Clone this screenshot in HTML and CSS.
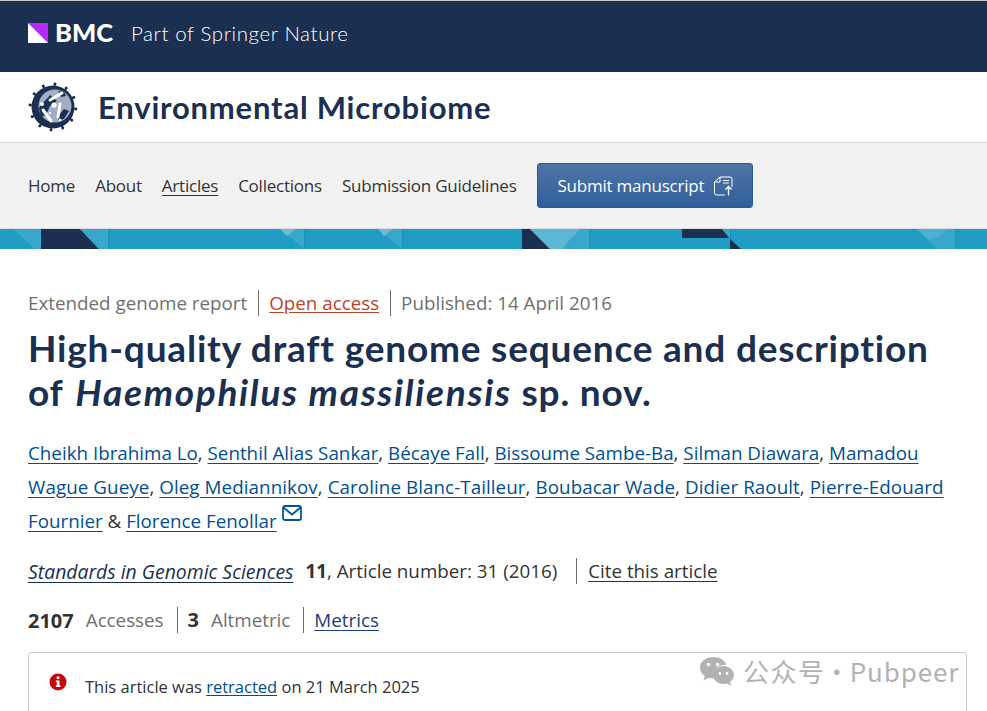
FILE: index.html
```html
<!DOCTYPE html>
<html lang="en">
<head>
<meta charset="utf-8">
<title>High-quality draft genome sequence and description of Haemophilus massiliensis sp. nov.</title>
<link rel="stylesheet" href="styles.css">
</head>
<body>
<header class="brand-bar">
  <svg class="bmc-mark" viewBox="0 0 20 20" width="20" height="20" aria-hidden="true"><rect width="20" height="20" fill="#fff"/><polygon points="0,0 20,0 20,20" fill="#b52bff"/></svg>
  <span class="bmc-word">BMC</span>
  <span class="bmc-part">Part of Springer Nature</span>
</header>
<div class="journal-bar">
  <svg class="journal-logo" viewBox="0 0 50 50" width="50" height="50" aria-hidden="true">
    <defs><g id="spike"><line x1="25" y1="2" x2="25" y2="8" stroke="#1b3051" stroke-width="1.500"/><circle cx="25" cy="2" r="1.500" fill="#1b3051"/></g></defs>
    <use href="#spike" transform="rotate(5 25 25)"/><use href="#spike" transform="rotate(35 25 25)"/>
    <use href="#spike" transform="rotate(65 25 25)"/><use href="#spike" transform="rotate(95 25 25)"/>
    <use href="#spike" transform="rotate(125 25 25)"/><use href="#spike" transform="rotate(155 25 25)"/>
    <use href="#spike" transform="rotate(185 25 25)"/><use href="#spike" transform="rotate(215 25 25)"/>
    <use href="#spike" transform="rotate(245 25 25)"/><use href="#spike" transform="rotate(275 25 25)"/>
    <use href="#spike" transform="rotate(305 25 25)"/><use href="#spike" transform="rotate(335 25 25)"/>
    <circle cx="25" cy="25" r="21.500" fill="#1b3051"/>
    <circle cx="27" cy="24" r="16.500" fill="#a3aec6"/>
    <path d="M11 26c3-6 8-8 11-13l7 6-7 5-4 9-5 2zM31 33l5-6 5 2-5 8-6 1zM30 9l6 1 2 4-5 1z" fill="#1b3051"/>
    <g stroke="#fff" stroke-width="3" stroke-linecap="round">
      <line x1="22" y1="18" x2="34" y2="11"/><line x1="15" y1="28" x2="23" y2="39"/><line x1="32" y1="22" x2="30" y2="35"/>
    </g>
    <circle cx="14" cy="22" r="2" fill="#fff"/><circle cx="26" cy="23" r="2.600" fill="#fff"/><circle cx="22" cy="31" r="1.200" fill="#fff"/><circle cx="32" cy="38" r="1.300" fill="#fff"/>
  </svg>
  <span class="journal-name">Environmental Microbiome</span>
</div>
<nav class="nav">
  <a class="nav-link" href="#">Home</a>
  <a class="nav-link" href="#">About</a>
  <a class="nav-link is-current" href="#">Articles</a>
  <a class="nav-link" href="#">Collections</a>
  <a class="nav-link" href="#">Submission Guidelines</a>
  <a class="submit" href="#">Submit manuscript
    <svg class="submit-icon" viewBox="0 0 20 20" width="20" height="20" fill="none" stroke="#fff" stroke-width="1" aria-hidden="true"><path d="M7 1h10a2 2 0 0 1 2 2v8M7 1 1.500 6v11a2 2 0 0 0 2 2h8.500M7 1v5H1.500M10 4.500h6M10 7h6"/><path d="M15.500 19.500v-9M12.500 13.500l3-3 3 3" stroke-width="1.300"/></svg>
  </a>
</nav>
<svg class="banner" viewBox="0 0 987 20" preserveAspectRatio="none" aria-hidden="true">
  <rect width="987" height="20" fill="#1f9dc5"/>
  <polygon points="13,0 41,0 41,20 35,20" fill="#39a7cc"/>
  <polygon points="41,0 80,0 99,20 41,20" fill="#1b3051"/>
  <polygon points="80,0 108,0 108,20 99,20" fill="#39a7cc"/>
  <rect x="108" width="1.500" height="20" fill="#1c93ba"/>
  <polygon points="280,0 304,0 304,20" fill="#39a7cc"/>
  <polygon points="280,0 296,0 287,7" fill="#6dbcd6"/>
  <rect x="304" width="1.500" height="20" fill="#1c93ba"/>
  <polygon points="378,0 402,0 402,20" fill="#39a7cc"/>
  <polygon points="378,0 393,0 384,7" fill="#6dbcd6"/>
  <rect x="402" width="1.500" height="20" fill="#1c93ba"/>
  <polygon points="522,0 530,0 550,20 522,20" fill="#1b3051"/>
  <polygon points="530,0 580,0 562,20 550,20" fill="#5cb6d4"/>
  <polygon points="580,0 589,0 589,20 562,20" fill="#39a7cc"/>
  <rect x="589" width="1.500" height="20" fill="#1c93ba"/>
  <polygon points="682,0 722,0 729,9 682,9" fill="#1b3051"/>
  <polygon points="722,0 730,0 730,9" fill="#39a7cc"/>
  <polygon points="730,10 741,20 730,20" fill="#1b3051"/>
  <rect x="730" width="1.500" height="10" fill="#1c93ba"/>
  <polygon points="917,0 955,0 955,20 937,20" fill="#39a7cc"/>
  <polygon points="917,0 947,0 939,7 929,11" fill="#4cb0d1"/>
  <rect x="955" width="1.500" height="20" fill="#1c93ba"/>
</svg>
<main class="article">
  <div class="meta-row">
    <span class="muted">Extended genome report</span>
    <span class="sep"><a class="open-access" href="#">Open access</a></span>
    <span class="sep muted">Published: 14 April 2016</span>
  </div>
  <h1 class="title">High-quality draft genome sequence and description of <i class="species">Haemophilus massiliensis</i> sp. nov.</h1>
  <p class="authors">
    <a href="#">Cheikh Ibrahima Lo</a>, <a href="#">Senthil Alias Sankar</a>, <a href="#">Bécaye Fall</a>, <a href="#">Bissoume Sambe-Ba</a>, <a href="#">Silman Diawara</a>, <a href="#">Mamadou</a> <span class="line-two"><a href="#">Wague Gueye</a>, <a href="#">Oleg Mediannikov</a>, <a href="#">Caroline Blanc-Tailleur</a>, <a href="#">Boubacar Wade</a>, <a href="#">Didier Raoult</a>, <a href="#">Pierre-Edouard</a></span> <a href="#">Fournier</a> &amp; <a href="#">Florence Fenollar</a><svg class="mail" viewBox="0 0 20 16" width="20" height="16" fill="none" stroke="#00569d" stroke-width="1.800" aria-hidden="true"><rect x="1" y="1" width="18" height="14" rx="2"/><path d="M1.500 2.500 10 9.500l8.500-7"/></svg>
  </p>
  <div class="citation">
    <a class="journal-link" href="#">Standards in Genomic Sciences</a>
    <b class="vol">11</b><span class="art">, Article number: 31 (2016)</span>
    <span class="sep sep-cite"><a class="plain-link" href="#">Cite this article</a></span>
  </div>
  <div class="stats">
    <b class="stat-num">2107</b><span class="muted stat-label">Accesses</span>
    <span class="sep sep-stat"><b class="stat-num">3</b><span class="muted stat-label">Altmetric</span></span>
    <span class="sep sep-stat"><a class="metrics" href="#">Metrics</a></span>
  </div>
  <div class="notice">
    <svg class="notice-icon" viewBox="0 0 18 18" width="18" height="18" aria-hidden="true"><circle cx="9" cy="9" r="8.500" fill="#c40606"/><circle cx="9" cy="4.800" r="1.500" fill="#fff"/><path d="M6.800 7.500H10.500V12.500H11.500V14H6.800V12.500H7.800V9H6.800Z" fill="#fff"/></svg>
    <span class="notice-text">This article was <a href="#">retracted</a> on 21 March 2025</span>
  </div>
</main>
<div class="watermark">
  <svg class="wechat" viewBox="0 0 36 30" width="36" height="30" aria-hidden="true">
    <path d="M14 1C6.800 1 1 5.800 1 11.800c0 3.400 1.900 6.300 4.800 8.300L4.500 24.500l5-2.700c1.400.4 2.900.6 4.500.6h1.200c-.4-1.100-.6-2.200-.6-3.400 0-5.700 5.300-10.200 11.800-10.200h.9C26.400 4.400 20.700 1 14 1Z" fill="#b2b2b2"/>
    <path d="M35 19c0-5-4.800-9-10.500-9S14 14 14 19s4.800 9 10.500 9c1.200 0 2.300-.2 3.400-.5l4.200 2.300-1.100-3.700C33.200 24.400 35 21.900 35 19Z" fill="#b2b2b2"/>
    <circle cx="9.500" cy="8.500" r="1.800" fill="#fff"/><circle cx="18.500" cy="8.500" r="1.800" fill="#fff"/>
    <circle cx="21" cy="17.500" r="1.400" fill="#fff"/><circle cx="28" cy="17.500" r="1.400" fill="#fff"/>
  </svg>
  <span class="wm-text">公众号 · <span class="wm-latin">Pubpeer</span></span>
</div>
</body>
</html>
```
FILE: styles.css
```css
* { box-sizing: border-box; }
html, body { margin: 0; height: 711px; overflow: hidden; }
body {
  position: relative;
  background: #fff;
  color: #333;
  font-family: "Open Sans", "Noto Sans", sans-serif;
  font-size: 18.800px;
}
a { color: #004f8f; }

.brand-bar {
  height: 72px;
  background: #1b3051;
  border-top: 1px solid #c8c8c8;
  display: flex;
  align-items: center;
  padding: 0 0 7px 28px;
  color: #fff;
}
.bmc-mark { margin-right: 7px; }
.bmc-word { font-family: Lato, sans-serif; font-weight: 900; font-size: 25.500px; line-height: 1; margin-right: 18px; }
.bmc-part { font-family: Lato, sans-serif; font-weight: 300; font-size: 20.500px; letter-spacing: .6px; }

.journal-bar {
  height: 71px;
  display: flex;
  align-items: center;
  padding-left: 28px;
  gap: 20px;
  border-bottom: 1px solid #d5d5d5;
}
.journal-name { font-family: Lato, sans-serif; font-weight: 700; font-size: 31px; color: #1b3051; letter-spacing: .8px; }

.nav {
  height: 86px;
  background: #f2f2f2;
  display: flex;
  align-items: center;
  padding-left: 28px;
  gap: 20px;
  border-bottom: 1px solid #dcdcdc;
  font-size: 17px;
  letter-spacing: -.23px;
}
.nav-link { color: #333; text-decoration: none; }
.nav-link.is-current { text-decoration: underline; text-underline-offset: 3px; }
.submit {
  width: 216px;
  height: 45px;
  display: flex;
  align-items: center;
  gap: 9px;
  padding-left: 20px;
  color: #fff;
  text-decoration: none;
  border: 1px solid #2a5a96;
  border-radius: 3px;
  background: linear-gradient(#4e75a7, #315e9b);
}
.banner { display: block; width: 100%; height: 20px; }

.article { padding: 41px 20px 0 28px; }
.meta-row { display: flex; align-items: center; height: 26px; }
.muted { color: #6f6f6f; }
.sep { border-left: 1px solid #6f6f6f; margin-left: 11px; padding-left: 10px; display: inline-block; line-height: 26px; }
.sep-cite { margin-left: 19px; padding-left: 11px; }
.sep-stat { margin-left: 13px; }
.open-access { color: #b8452c; text-underline-offset: 2px; }
.title {
  margin: 10px 0 0;
  font-family: Lato, sans-serif;
  font-weight: 700;
  font-size: 37px;
  line-height: 44px;
  color: #1b3051;
  letter-spacing: .8px;
}
.species { letter-spacing: 1.700px; margin-left: 2.500px; }
.authors { margin: 22px 0 0; line-height: 34px; max-width: 925px; }
.authors a { text-underline-offset: 3px; }
.line-two { letter-spacing: .07px; }
.mail { margin-left: 5px; vertical-align: 7px; }
.citation { margin-top: 20px; display: flex; align-items: center; height: 26px; }
.journal-link { font-style: italic; font-size: 19.400px; color: #1b3051; margin-right: 12px; text-underline-offset: 3px; }
.vol { font-weight: 700; }
.plain-link { color: #333; text-underline-offset: 3px; }
.stats { margin-top: 23px; display: flex; align-items: center; height: 26px; }
.stat-num { font-size: 20px; }
.stat-label { margin-left: 12px; }
.metrics { color: #1b3f7a; text-underline-offset: 3px; }
.notice {
  margin: 19px 0 0;
  height: 70px;
  border: 1px solid #ccc;
  border-radius: 3px;
  display: flex;
  align-items: flex-start;
  padding: 20px 0 0 20px;
  gap: 18px;
  font-size: 16.500px;
}
.notice-text { margin-top: 2px; }
.notice a { text-underline-offset: 2px; }

.watermark {
  position: absolute;
  left: 699px;
  top: 652px;
  display: flex;
  align-items: center;
  gap: 8px;
  color: #b2b2b2;
  font-family: "Noto Sans CJK SC", "Noto Sans", sans-serif;
  font-size: 26px;
  letter-spacing: 1.500px;
  word-spacing: -9px;
}
.wm-latin { letter-spacing: .9px; }
```
